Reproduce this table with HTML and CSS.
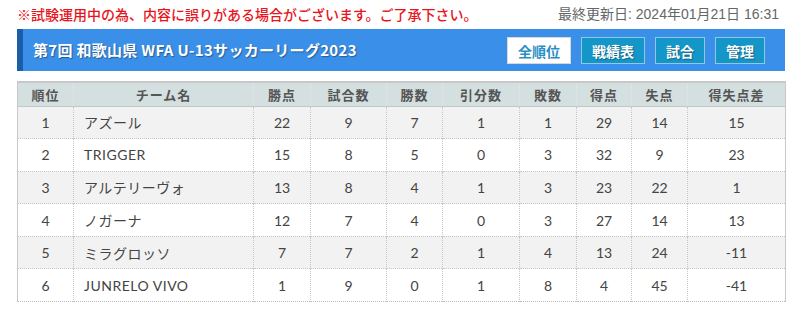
FILE: index.html
```html
<!DOCTYPE html>
<html lang="ja">
<head>
<meta charset="utf-8">
<link rel="stylesheet" href="styles.css">
</head>
<body>
<div class="page">
  <div class="notice-row">
    <p class="notice">※試験運用中の為、内容に誤りがある場合がございます。ご了承下さい。</p>
    <p class="updated">最終更新日: 2024年01月21日 16:31</p>
  </div>
  <div class="bar">
    <h1 class="title">第7回 和歌山県 WFA U-13サッカーリーグ2023</h1>
    <nav class="buttons">
      <a class="btn btn-active">全順位</a>
      <a class="btn">戦績表</a>
      <a class="btn">試合</a>
      <a class="btn">管理</a>
    </nav>
  </div>
  <table class="standings">
    <colgroup>
      <col style="width:56px"><col style="width:180px"><col style="width:57px"><col style="width:76px"><col style="width:56px"><col style="width:77px"><col style="width:57px"><col style="width:55px"><col style="width:56px"><col style="width:98px">
    </colgroup>
    <thead>
      <tr><th>順位</th><th>チーム名</th><th>勝点</th><th>試合数</th><th>勝数</th><th>引分数</th><th>敗数</th><th>得点</th><th>失点</th><th>得失点差</th></tr>
    </thead>
    <tbody>
      <tr><td>1</td><td class="team">アズール</td><td>22</td><td>9</td><td>7</td><td>1</td><td>1</td><td>29</td><td>14</td><td>15</td></tr>
      <tr><td>2</td><td class="team">TRIGGER</td><td>15</td><td>8</td><td>5</td><td>0</td><td>3</td><td>32</td><td>9</td><td>23</td></tr>
      <tr><td>3</td><td class="team">アルテリーヴォ</td><td>13</td><td>8</td><td>4</td><td>1</td><td>3</td><td>23</td><td>22</td><td>1</td></tr>
      <tr><td>4</td><td class="team">ノガーナ</td><td>12</td><td>7</td><td>4</td><td>0</td><td>3</td><td>27</td><td>14</td><td>13</td></tr>
      <tr><td>5</td><td class="team">ミラグロッソ</td><td>7</td><td>7</td><td>2</td><td>1</td><td>4</td><td>13</td><td>24</td><td>-11</td></tr>
      <tr><td>6</td><td class="team">JUNRELO VIVO</td><td>1</td><td>9</td><td>0</td><td>1</td><td>8</td><td>4</td><td>45</td><td>-41</td></tr>
    </tbody>
  </table>
</div>
</body>
</html>
```
FILE: styles.css
```css
* { box-sizing: border-box; }
html, body { margin: 0; padding: 0; background: #fff; }
body {
  font-family: "Noto Sans CJK JP", "Noto Sans", sans-serif;
  color: #333;
}
.page {
  width: 800px;
  padding: 0 15px 0 17px;
}
.notice-row {
  height: 29px;
  display: flex;
  justify-content: space-between;
  align-items: center;
  padding-bottom: 1px;
}
.notice-row p { margin: 0; line-height: 16px; }
.notice { color: #e8141b; font-size: 14px; font-weight: 500; }
.updated {
  color: #666;
  margin-right: 6px !important;
  font-family: "Liberation Sans", "Noto Sans CJK JP", sans-serif;
  font-size: 14px;
}
.bar {
  height: 42px;
  background: #3a8fe8;
  border-left: 6px solid #1a5ea8;
  display: flex;
  align-items: center;
  justify-content: space-between;
  padding: 0 20px 0 10px;
}
.title {
  margin: 0;
  font-size: 15px;
  font-weight: 700;
  color: #fff;
  text-shadow: 1px 1px 1px rgba(0,0,0,0.35);
  letter-spacing: 0.3px;
  padding-bottom: 1px;
}
.buttons {
  display: flex;
  gap: 10px;
  padding-top: 1px;
}
.btn {
  display: flex;
  align-items: center;
  justify-content: center;
  white-space: nowrap;
  height: 27px;
  padding: 0 10px;
  background: #1596c9;
  border: 1px solid #8ec9e6;
  color: #fff;
  font-size: 14px;
  font-weight: 700;
  text-shadow: 1px 1px 1px rgba(0,0,0,0.35);
}
.btn-active {
  background: #fff;
  border-color: #d8d8d8;
  color: #2a8ec6;
  text-shadow: none;
}
.standings {
  margin-top: 10px;
  width: 768px;
  border-collapse: collapse;
  table-layout: fixed;
  border-left: 1px solid #c8c8c8;
  border-right: 1px solid #c8c8c8;
  border-bottom: 1px dotted #bbb;
}
.standings th {
  background: #d4dfdf;
  height: 24px;
  font-size: 13px;
  font-weight: 700;
  color: #555;
  border-top: 2px solid #c8c8c8;
  border-bottom: 1px solid #c0c8c8;
  border-left: 1px dotted #e6e6e6;
  padding: 0;
  letter-spacing: 1px;
}
.standings td {
  height: 32.6px;
  font-family: "Lato", "Noto Sans CJK JP", sans-serif;
  font-size: 14px;
  color: #444;
  text-align: center;
  border-left: 1px dotted #c8c8c8;
  border-top: 1px dotted #c8c8c8;
  padding: 0;
}
.standings tbody tr:nth-child(odd) td { background: #f2f2f2; }
.standings td.team {
  text-align: left;
  padding-left: 10px;
  letter-spacing: 0.5px;
}
```
